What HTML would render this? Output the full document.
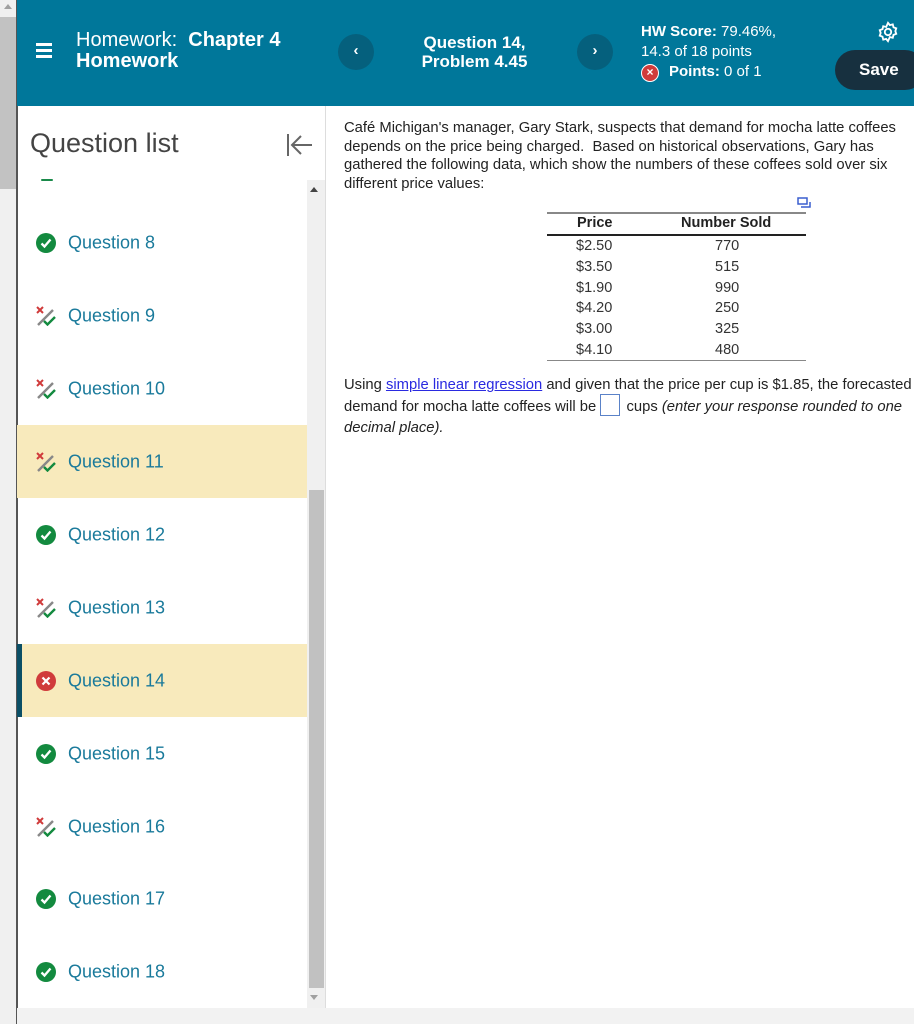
<!DOCTYPE html>
<html><head><meta charset="utf-8"><style>
*{margin:0;padding:0;box-sizing:border-box}
body{width:914px;height:1024px;overflow:hidden;background:#fff;font-family:"Liberation Sans",Arial,sans-serif;position:relative}
.abs{position:absolute}
.hdr{left:17px;top:0;width:897px;height:106px;background:#00779a;color:#fff}
.qrow{position:absolute;left:17px;width:290px;height:73px}
.qrow span{position:absolute;left:51px;top:50%;transform:translateY(-50%);font-size:18px;color:#1a7a9b}
.ic{position:absolute;left:19px;top:50%;margin-top:-10px;width:20px;height:20px}
</style></head><body>
<div class="abs" style="left:0;top:0;width:17px;height:1024px;background:#f0f0f0"></div>
<div class="abs" style="left:0;top:17px;width:16px;height:172px;background:#c2c2c2"></div>
<div class="abs" style="left:4px;top:4px;width:0;height:0;border-left:4px solid transparent;border-right:4px solid transparent;border-bottom:5px solid #a0a0a0"></div>
<div class="abs" style="left:16px;top:0;width:2px;height:1024px;background:#555"></div>

<div class="abs hdr">
 <div class="abs" style="left:19px;top:43px;width:16px;height:3px;background:#fff;box-shadow:0 6px 0 #fff,0 12px 0 #fff"></div>
 <div class="abs" style="left:59px;top:30px;font-size:20px;line-height:21px">Homework:&nbsp; <b>Chapter 4</b><br><b>Homework</b></div>
 <div class="abs" style="left:321px;top:34px;width:36px;height:36px;border-radius:50%;background:#05607d;text-align:center;line-height:34px;font-size:15px;font-weight:bold">‹</div>
 <div class="abs" style="left:380px;top:33px;width:155px;text-align:center;font-size:17px;font-weight:bold;line-height:19px">Question 14,<br>Problem 4.45</div>
 <div class="abs" style="left:560px;top:34px;width:36px;height:36px;border-radius:50%;background:#05607d;text-align:center;line-height:34px;font-size:15px;font-weight:bold">›</div>
 <div class="abs" style="left:624px;top:22px;font-size:15px;line-height:20px"><b>HW Score:</b> 79.46%,<br>14.3 of 18 points</div>
 <div class="abs" style="left:624px;top:64px;width:18px;height:18px;border-radius:50%;background:#d03b3b;border:1px solid #fff;color:#fff;font-size:12px;text-align:center;line-height:15px;font-weight:bold">×</div>
 <div class="abs" style="left:652px;top:63px;font-size:15px"><b>Points:</b> 0 of 1</div>
 <svg class="abs" style="left:860px;top:21px" width="22" height="22" viewBox="0 0 24 24" fill="none" stroke="#fff" stroke-width="2"><circle cx="12" cy="12" r="3.5"/><path d="M12 2l2 2.5 3.2-.8.8 3.2L21 8l-1 3 1 3-3 1.1-.8 3.2-3.2-.8L12 22l-2-2.5-3.2.8-.8-3.2L3 16l1-3-1-3 3-1.1.8-3.2 3.2.8z"/></svg>
 <div class="abs" style="left:818px;top:50px;width:90px;height:40px;border-radius:20px;background:#17303f;font-size:17px;font-weight:bold;line-height:40px;padding-left:24px">Save</div>
</div>

<div class="abs" style="left:30px;top:128px;font-size:27px;color:#444">Question list</div>
<svg class="abs" style="left:286px;top:133px" width="28" height="24" viewBox="0 0 28 24" fill="none" stroke="#666" stroke-width="2"><path d="M2 1v22M26 12H7M15 3l-9 9 9 9"/></svg>
<div class="abs" style="left:41px;top:179px;width:12px;height:2px;background:#1a8a4a;border-radius:2px"></div>
<div class="abs" style="left:307px;top:180px;width:18px;height:828px;background:#f0f0f0"></div>
<div class="abs" style="left:310px;top:187px;width:0;height:0;border-left:4px solid transparent;border-right:4px solid transparent;border-bottom:5px solid #444"></div>
<div class="abs" style="left:309px;top:490px;width:15px;height:498px;background:#c1c1c1"></div>
<div class="abs" style="left:310px;top:995px;width:0;height:0;border-left:4px solid transparent;border-right:4px solid transparent;border-top:5px solid #a0a0a0"></div>
<div class="abs" style="left:325px;top:106px;width:1px;height:902px;background:#ddd"></div>
<div class="abs" style="left:17px;top:1008px;width:897px;height:16px;background:#f2f2f2"></div>

<div class="qrow" style="top:206px"><svg class="ic" viewBox="0 0 20 20"><circle cx="10" cy="10" r="10" fill="#138a3f"/><path d="M5.5 10.5l3 3 6-7" stroke="#fff" stroke-width="2.3" fill="none"/></svg><span>Question 8</span></div>
<div class="qrow" style="top:279px"><svg class="ic" viewBox="0 0 20 20"><path d="M1 1l6 6M7 1l-6 6" stroke="#d03b3b" stroke-width="2"/><path d="M2 19L17 4" stroke="#888" stroke-width="2.4"/><path d="M8 15l3.5 3.5L19 11" stroke="#138a3f" stroke-width="2.4" fill="none"/></svg><span>Question 9</span></div>
<div class="qrow" style="top:352px"><svg class="ic" viewBox="0 0 20 20"><path d="M1 1l6 6M7 1l-6 6" stroke="#d03b3b" stroke-width="2"/><path d="M2 19L17 4" stroke="#888" stroke-width="2.4"/><path d="M8 15l3.5 3.5L19 11" stroke="#138a3f" stroke-width="2.4" fill="none"/></svg><span>Question 10</span></div>
<div class="qrow" style="top:425px;background:#f8eabc"><svg class="ic" viewBox="0 0 20 20"><path d="M1 1l6 6M7 1l-6 6" stroke="#d03b3b" stroke-width="2"/><path d="M2 19L17 4" stroke="#888" stroke-width="2.4"/><path d="M8 15l3.5 3.5L19 11" stroke="#138a3f" stroke-width="2.4" fill="none"/></svg><span>Question 11</span></div>
<div class="qrow" style="top:498px"><svg class="ic" viewBox="0 0 20 20"><circle cx="10" cy="10" r="10" fill="#138a3f"/><path d="M5.5 10.5l3 3 6-7" stroke="#fff" stroke-width="2.3" fill="none"/></svg><span>Question 12</span></div>
<div class="qrow" style="top:571px"><svg class="ic" viewBox="0 0 20 20"><path d="M1 1l6 6M7 1l-6 6" stroke="#d03b3b" stroke-width="2"/><path d="M2 19L17 4" stroke="#888" stroke-width="2.4"/><path d="M8 15l3.5 3.5L19 11" stroke="#138a3f" stroke-width="2.4" fill="none"/></svg><span>Question 13</span></div>
<div class="qrow" style="top:644px;background:#f8eabc;border-left:5px solid #0b4f66"><svg class="ic" style="left:14px" viewBox="0 0 20 20"><circle cx="10" cy="10" r="10" fill="#d03b3b"/><path d="M6.5 6.5l7 7M13.5 6.5l-7 7" stroke="#fff" stroke-width="2.2"/></svg><span style="left:46px">Question 14</span></div>
<div class="qrow" style="top:717px"><svg class="ic" viewBox="0 0 20 20"><circle cx="10" cy="10" r="10" fill="#138a3f"/><path d="M5.5 10.5l3 3 6-7" stroke="#fff" stroke-width="2.3" fill="none"/></svg><span>Question 15</span></div>
<div class="qrow" style="top:790px"><svg class="ic" viewBox="0 0 20 20"><path d="M1 1l6 6M7 1l-6 6" stroke="#d03b3b" stroke-width="2"/><path d="M2 19L17 4" stroke="#888" stroke-width="2.4"/><path d="M8 15l3.5 3.5L19 11" stroke="#138a3f" stroke-width="2.4" fill="none"/></svg><span>Question 16</span></div>
<div class="qrow" style="top:862px"><svg class="ic" viewBox="0 0 20 20"><circle cx="10" cy="10" r="10" fill="#138a3f"/><path d="M5.5 10.5l3 3 6-7" stroke="#fff" stroke-width="2.3" fill="none"/></svg><span>Question 17</span></div>
<div class="qrow" style="top:935px"><svg class="ic" viewBox="0 0 20 20"><circle cx="10" cy="10" r="10" fill="#138a3f"/><path d="M5.5 10.5l3 3 6-7" stroke="#fff" stroke-width="2.3" fill="none"/></svg><span>Question 18</span></div>

<div class="abs" style="left:344px;top:119px;width:568px;font-size:14.8px;line-height:18.5px;color:#222">Café Michigan's manager, Gary Stark, suspects that demand for mocha latte coffees depends on the price being charged.&nbsp; Based on historical observations, Gary has gathered the following data, which show the numbers of these coffees sold over six different price values:</div>
<svg class="abs" style="left:797px;top:197px" width="14" height="12" viewBox="0 0 14 12" fill="none" stroke="#3a5fcf" stroke-width="1.5"><rect x="1" y="1" width="9" height="6"/><path d="M4 10h9V5"/></svg>
<div class="abs" style="left:547px;top:212px;width:259px;height:2px;background:#888"></div>
<div class="abs" style="left:577px;top:215px;font-size:14.5px;font-weight:bold;color:#222">Price</div>
<div class="abs" style="left:681px;top:215px;font-size:14.5px;font-weight:bold;color:#222">Number Sold</div>
<div class="abs" style="left:547px;top:234px;width:259px;height:2px;background:#222"></div>
<div class="abs" style="left:576px;top:236px;font-size:14.5px;line-height:20.8px;color:#333">$2.50<br>$3.50<br>$1.90<br>$4.20<br>$3.00<br>$4.10</div>
<div class="abs" style="left:715px;top:236px;font-size:14.5px;line-height:20.8px;color:#333">770<br>515<br>990<br>250<br>325<br>480</div>
<div class="abs" style="left:547px;top:360px;width:259px;height:1px;background:#888"></div>
<div class="abs" style="left:344px;top:375px;width:570px;font-size:14.8px;line-height:21.5px;color:#222;white-space:nowrap">Using <span style="color:#2a2ae0;text-decoration:underline">simple linear regression</span> and given that the price per cup is $1.85, the forecasted<br>demand for mocha latte coffees will be <span style="display:inline-block;width:20px;height:22px;border:1px solid #5a82c8;vertical-align:middle;margin:-4px 2px 0 0"></span> cups <i>(enter your response rounded to one</i><br><i>decimal place).</i></div>
</body></html>
